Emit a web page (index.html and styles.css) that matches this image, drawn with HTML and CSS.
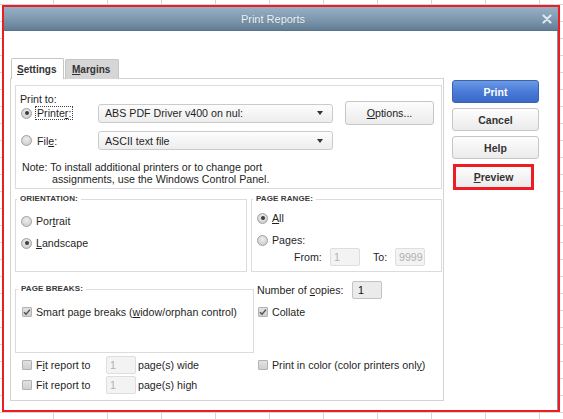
FILE: index.html
```html
<!DOCTYPE html>
<html lang="en">
<head>
  <meta charset="UTF-8" />
  <meta name="viewport" content="width=device-width, initial-scale=1.0"/>
  <title>Print Reports</title>
  <link rel="stylesheet" href="styles.css">
</head>
<body>
  <div class="marked-frame">
    <div class="dialog">
      <div class="titlebar">
        <span></span>
        <span class="title">Print Reports</span>
        <svg class="close" width="10" height="10" viewBox="0 0 10 10">
          <path d="M1.5 1.5 L8.5 8.5 M8.5 1.5 L1.5 8.5" stroke="#dfe5ea" stroke-width="2.2" stroke-linecap="round"/>
        </svg>
      </div>

      <div class="dialog-body">
        <div class="tab-area">
          <div class="tabs">
            <div class="tab active"><u>S</u>ettings</div>
            <div class="tab"><u>M</u>argins</div>
          </div>

          <div class="tab-panel">
            <!-- destination -->
            <div class="group print-to">
              <div class="print-to-label">Print to:</div>
              <div class="dest-row">
                <div class="choice dest-choice"><span class="radio checked"></span><span class="focus">Printe<u>r</u>:</span></div>
                <div class="select"><span>ABS PDF Driver v400 on nul:</span><span class="arrow"></span></div>
                <button class="btn options"><u>O</u>ptions...</button>
              </div>
              <div class="dest-row file-row">
                <div class="choice dest-choice"><span class="radio"></span><span class="plain">Fil<u>e</u>:</span></div>
                <div class="select"><span>ASCII text file</span><span class="arrow"></span></div>
              </div>
              <p class="note">Note: To install additional printers or to change port<br><span class="note-cont">assignments, use the Windows Control Panel.</span></p>
            </div>

            <div class="group-row">
              <fieldset class="box orientation">
                <legend>ORIENTATION:</legend>
                <div class="choice"><span class="radio"></span>Por<u>t</u>rait</div>
                <div class="choice next"><span class="radio checked"></span><u>L</u>andscape</div>
              </fieldset>

              <fieldset class="box page-range">
                <legend>PAGE RANGE:</legend>
                <div class="choice"><span class="radio checked"></span><u>A</u>ll</div>
                <div class="choice next"><span class="radio"></span>Pa<u>g</u>es:</div>
                <div class="range-row">
                  <span class="from-label">From:</span>
                  <span class="field disabled">1</span>
                  <span class="to-label">To:</span>
                  <span class="field disabled">9999</span>
                </div>
              </fieldset>
            </div>

            <div class="options-grid">
              <fieldset class="box page-breaks">
                <legend>PAGE BREAKS:</legend>
                <div class="choice">
                  <span class="checkbox checked"><svg width="8" height="8" viewBox="0 0 8 8"><path d="M1 4.2 L3 6.2 L7 1.6" fill="none" stroke="#505050" stroke-width="1.4"/></svg></span>
                  Smart page breaks (<u>w</u>idow/orphan control)
                </div>
              </fieldset>

              <div class="copies-col">
                <div class="copies-row">
                  <span class="copies-label">Number of <u>c</u>opies:</span>
                  <span class="field copies">1</span>
                </div>
                <div class="choice collate">
                  <span class="checkbox checked"><svg width="8" height="8" viewBox="0 0 8 8"><path d="M1 4.2 L3 6.2 L7 1.6" fill="none" stroke="#505050" stroke-width="1.4"/></svg></span>
                  Collate
                </div>
              </div>

              <div class="fit-col">
                <div class="fit-row">
                  <span class="checkbox"></span>
                  <span class="fit-label">F<u>i</u>t report to</span>
                  <span class="field disabled">1</span>
                  <span class="fit-unit">page(s) wide</span>
                </div>
                <div class="fit-row next">
                  <span class="checkbox"></span>
                  <span class="fit-label">Fit report to</span>
                  <span class="field disabled">1</span>
                  <span class="fit-unit">page(s) high</span>
                </div>
              </div>

              <div class="color-col">
                <div class="fit-row">
                  <span class="checkbox"></span>
                  <span>Print in color (color printers onl<u>y</u>)</span>
                </div>
              </div>
            </div>
          </div>
        </div>

        <div class="actions">
          <button class="btn primary">Print</button>
          <button class="btn">Cancel</button>
          <button class="btn">Help</button>
          <button class="btn marked"><u>P</u>review</button>
        </div>
      </div>
    </div>
  </div>
</body>
</html>
```

FILE: styles.css
```css
* {
  box-sizing: border-box;
}

body {
  margin: 0;
  width: 563px;
  height: 419px;
  overflow: hidden;
  font-family: "Liberation Sans", Arial, sans-serif;
  font-size: 10.67px;
  color: #1f1f1f;
  background-color: #ffffff;
  /* spreadsheet grid behind the dialog */
  background-image:
    linear-gradient(to right, #d6d6d6 1px, transparent 1px),
    linear-gradient(to bottom, #d6d6d6 1px, transparent 1px);
  background-size: 54px 17px;
  background-position: 53px 4px;
}

u {
  text-underline-offset: 1px;
}

.marked-frame {
  margin: 5px 0 0 2px;
  width: 558px;
  height: 407px;
  border: 2px solid #ee1d23;
}

.dialog {
  height: 100%;
  display: flex;
  flex-direction: column;
  background: #ffffff;
}

/* title bar */
.titlebar {
  flex: none;
  height: 24px;
  display: grid;
  grid-template-columns: 1fr auto 1fr;
  align-items: center;
  padding-right: 6px;
  background: linear-gradient(#97b0c6, #7d98ae 55%, #627e95);
  border-bottom: 1px solid #58738a;
}

.title {
  margin-right: 10px;
  font-size: 11px;
  color: #f1f4f7;
  text-shadow: 0 0 1px rgba(40, 60, 80, 0.4);
}

.close {
  justify-self: end;
}

.dialog-body {
  flex: 1;
  display: flex;
  align-items: flex-start;
  padding: 27px 0 0 6px;
  border-right: 1px solid #7f97ab;
}

/* tabs */
.tab-area {
  width: 434px;
}

.tabs {
  display: flex;
  align-items: flex-end;
  height: 21px;
  margin-bottom: -1px;
}

.tab {
  font-size: 10px;
  font-weight: bold;
  color: #333333;
  line-height: 13px;
  border: 1px solid #c6c6c6;
  border-bottom: none;
  border-radius: 2px 2px 0 0;
}

.tab.active {
  position: relative;
  z-index: 1;
  margin-left: 1px;
  width: 53px;
  height: 21px;
  padding: 4px 0 0 5px;
  background: #ffffff;
}

.tab:not(.active) {
  margin-left: 1px;
  width: 54px;
  height: 20px;
  padding: 3px 0 0 6px;
  background: #d6d6d6;
}

.tab-panel {
  height: 323px;
  border: 1px solid #d3d3d3;
  padding: 6px 1px 0 4px;
  background: #ffffff;
}

/* group boxes */
.group {
  border: 1px solid #dcdcdc;
}

.print-to {
  height: 104px;
  padding: 8px 0 0 4px;
}

.print-to-label {
  line-height: 11px;
}

.dest-row {
  display: flex;
  align-items: center;
  height: 24px;
  margin-top: -4px;
}

.file-row {
  height: 19px;
  margin-top: 6px;
}

.choice {
  display: flex;
  align-items: center;
  height: 16px;
  white-space: nowrap;
}

.dest-choice {
  width: 78px;
}

.dest-choice .radio {
  margin-left: 1px;
  margin-right: 3px;
}

.focus {
  padding: 0 1px;
  line-height: 12px;
  border: 1px dotted #444444;
}

.plain {
  padding-left: 2px;
}

.select {
  width: 235px;
  height: 19px;
  display: flex;
  align-items: center;
  justify-content: space-between;
  padding: 0 9px 0 6px;
  border: 1px solid #cbcbcb;
  border-radius: 3px;
  background: linear-gradient(#fdfdfd, #ededed);
}

.arrow {
  width: 0;
  height: 0;
  border-left: 3.5px solid transparent;
  border-right: 3.5px solid transparent;
  border-top: 4px solid #333333;
}

.note {
  margin: 11px 0 0 2px;
  line-height: 12px;
}

.note-cont {
  padding-left: 30px;
}

.group-row {
  display: flex;
  gap: 4px;
  margin-top: 5px;
}

fieldset.box {
  margin: 0;
  min-width: 0;
  padding: 0 0 0 5px;
  border: 1px solid #dcdcdc;
}

fieldset.box legend {
  margin-left: -4px;
  padding: 0 3px;
  font-size: 8px;
  font-weight: bold;
  line-height: 10px;
  color: #3a3a3a;
  letter-spacing: 0.1px;
}

.orientation {
  width: 232px;
  height: 78px;
  padding-top: 9px !important;
}

.page-range {
  width: 191px;
  height: 78px;
  padding-top: 6px !important;
}

.choice.next {
  margin-top: 6px;
}

.radio {
  flex: none;
  position: relative;
  width: 11px;
  height: 11px;
  margin-right: 4px;
  border: 1px solid #a0a0a0;
  border-radius: 50%;
  background: radial-gradient(circle at 50% 35%, #eeeeee, #c6c6c6);
}

.radio.checked::after {
  content: "";
  position: absolute;
  left: 2.5px;
  top: 2.5px;
  width: 4px;
  height: 4px;
  border-radius: 50%;
  background: #3c3c3c;
}

.checkbox {
  flex: none;
  display: flex;
  align-items: center;
  justify-content: center;
  width: 10px;
  height: 10px;
  margin-right: 4px;
  border: 1px solid #b2b2b2;
  border-radius: 1px;
  background: linear-gradient(#e2e2e2, #cfcfcf);
}

.range-row {
  display: flex;
  align-items: center;
  height: 18px;
  padding-left: 37px;
}

.from-label {
  width: 36px;
}

.to-label {
  width: 22px;
  margin-left: 13px;
}

.field {
  width: 30px;
  height: 18px;
  line-height: 16px;
  padding-left: 3px;
  border: 1px solid #dedede;
  border-radius: 2px;
}

.field.disabled {
  background: #f3f3f3;
  color: #b0b0b0;
}

/* bottom options */
.options-grid {
  display: grid;
  grid-template-columns: 239px 1fr;
  column-gap: 3px;
  row-gap: 3px;
  margin-top: 9px;
}

.page-breaks {
  height: 69px;
  margin-top: 3px !important;
  padding: 10px 0 0 6px !important;
}

.copies-row {
  display: flex;
  align-items: center;
  height: 18px;
}

.copies-label {
  width: 95px;
}

.field.copies {
  padding-left: 5px;
  border-color: #c3c3c3;
  background: #ebebeb;
  color: #111111;
}

.collate {
  margin-top: 5px;
}

.collate .checkbox,
.color-col .checkbox {
  margin-left: 1px;
}

.fit-row {
  display: flex;
  align-items: center;
  height: 18px;
  white-space: nowrap;
}

.fit-row.next {
  margin-top: 2px;
}

.fit-col .checkbox {
  margin-left: 7px;
}

.fit-label {
  width: 70px;
}

.fit-unit {
  margin-left: 2px;
}

/* command buttons */
.actions {
  width: 87px;
  margin: 22px 0 0 8px;
  display: flex;
  flex-direction: column;
  gap: 5px;
}

.btn {
  height: 23px;
  padding: 0;
  font-family: inherit;
  font-size: 10.5px;
  font-weight: bold;
  color: #333333;
  border: 1px solid #c6c6c6;
  border-radius: 3px;
  background: linear-gradient(#fdfdfd, #ebebeb);
}

.btn.primary {
  color: #ffffff;
  border-color: #3a62ad;
  background: linear-gradient(#6c9be5, #4a7bd8 50%, #3a69c7);
}

.btn.marked {
  width: 81px;
  height: 26px;
  margin-left: 1px;
  border: 3px solid #ee1d23;
  border-radius: 0;
}

.btn.options {
  width: 89px;
  height: 24px;
  margin-left: 12px;
  font-size: 10.67px;
  font-weight: normal;
  color: #222222;
}
```
